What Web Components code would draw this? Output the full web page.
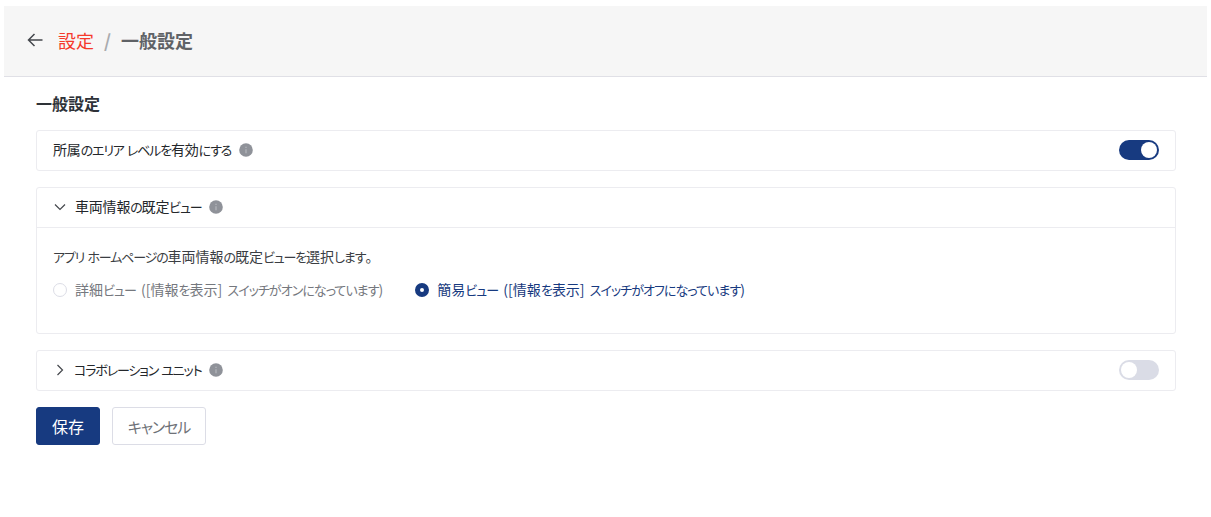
<!DOCTYPE html>
<html lang="ja">
<head>
<meta charset="utf-8">
<title>一般設定</title>
<style>
  html, body { margin: 0; padding: 0; background: #fff; }
  body { font-family: "Noto Sans CJK JP", "Noto Sans", sans-serif; font-feature-settings: "palt"; }
</style>
</head>
<body>
<settings-page>
  <page-header slot="header" parent="設定" current="一般設定"></page-header>
  <h-title>一般設定</h-title>

  <setting-card label="所属のエリア レベルを有効にする" toggle="on"></setting-card>

  <setting-card label="車両情報の既定ビュー" arrow="down" expanded>
    <p-text>アプリ ホームページの車両情報の既定ビューを選択します。</p-text>
    <radio-row>
      <radio-option>詳細ビュー ([情報を表示] スイッチがオンになっています)</radio-option>
      <radio-option checked>簡易ビュー ([情報を表示] スイッチがオフになっています)</radio-option>
    </radio-row>
  </setting-card>

  <setting-card label="コラボレーション ユニット" arrow="right" toggle="off"></setting-card>

  <action-bar>
    <ui-button primary>保存</ui-button>
    <ui-button>キャンセル</ui-button>
  </action-bar>
</settings-page>

<script>
// the original font has narrow kana, so kana runs get a tighter setting than the kanji
function tight(text) {
    return text.replace(/[ぁ-んァ-ヶー]+/g, (run) => `<span style="font-size:13px;letter-spacing:var(--kana-spacing,-1.15px)">${run}</span>`);
}

class base extends HTMLElement {
    constructor() {
        super();
        this._shadowDOM = this.attachShadow({mode: 'open'});
    }
}

class settingsPage extends base {
    connectedCallback() {
        this._shadowDOM.innerHTML = `
            <style>
                :host { display: block; padding-top: 6px; }
                .content { display: flex; flex-direction: column; padding: 0 35px 0 36px; }
            </style>
            <slot name="header"></slot>
            <div class="content"><slot></slot></div>
        `;
    }
}

class pageHeader extends base {
    connectedCallback() {
        this._shadowDOM.innerHTML = `
            <style>
                :host {
                    display: flex;
                    align-items: center;
                    height: 71px;
                    margin: 0 4px;
                    padding-left: 22px;
                    padding-bottom: 2px;
                    box-sizing: border-box;
                    background: #f6f6f6;
                    border-bottom: 1px solid #e0e0e6;
                    font-size: 18px;
                    line-height: 26px;
                }
                svg { display: block; margin-right: 14px; }
                .parent { color: #f5392b; }
                .sep { color: #a9abae; margin: 0 10px; font-weight: 700; }
                .current { color: #5f6266; font-weight: 700; }
            </style>
            <svg width="18" height="18" viewBox="0 0 18 18" fill="none" stroke="#44474c" stroke-width="1.5">
                <path d="M16.5 9H2.500M8.500 3L2.500 9l6 6"/>
            </svg>
            <span class="parent">${this.getAttribute('parent')}</span>
            <span class="sep">/</span>
            <span class="current">${this.getAttribute('current')}</span>
        `;
    }
}

class hTitle extends base {
    connectedCallback() {
        this._shadowDOM.innerHTML = `
            <style>
                :host {
                    display: block;
                    margin-top: 14px;
                    margin-bottom: 15px;
                    font-size: 16px;
                    line-height: 24px;
                    font-weight: 700;
                    color: #2e3238;
                }
            </style>
            <slot></slot>
        `;
    }
}

class settingCard extends base {
    connectedCallback() {
        const arrow = this.getAttribute('arrow');
        const toggle = this.getAttribute('toggle');
        const expanded = this.hasAttribute('expanded');
        let arrowSvg = '';
        if (arrow === 'down') {
            arrowSvg = '<svg class="arrow down" width="14" height="14" viewBox="0 0 14 14" fill="none" stroke="#44474c" stroke-width="1.2"><path d="M2 4.500l5 5 5-5"/></svg>';
        } else if (arrow === 'right') {
            arrowSvg = '<svg class="arrow" width="14" height="14" viewBox="0 0 14 14" fill="none" stroke="#44474c" stroke-width="1.2"><path d="M4.500 2l5 5-5 5"/></svg>';
        }
        this._shadowDOM.innerHTML = `
            <style>
                :host {
                    display: block;
                    margin-bottom: 16px;
                    background: #fff;
                    border: 1px solid #ececf0;
                    border-radius: 3px;
                    font-size: 14px;
                    color: #24272b;
                }
                .head {
                    display: flex;
                    align-items: center;
                    height: 39px;
                    padding: 0 16px 1px;
                    box-sizing: border-box;
                }
                .arrow { display: block; margin-right: 7px; flex: none; }
                .arrow.down { margin-right: 8px; }
                .label { white-space: pre; line-height: 20px; letter-spacing: -0.2px; padding-bottom: 2px; }
                .info { margin-left: 8px; display: block; flex: none; }
                .spacer { flex: 1; }
                .body {
                    height: 106px;
                    border-top: 1px solid #ececf0;
                    padding: 0 16px;
                    box-sizing: border-box;
                }
            </style>
            <div class="head">
                ${arrowSvg}
                <span class="label">${tight(this.getAttribute('label'))}</span>
                <svg class="info" width="14" height="14" viewBox="0 0 14 14">
                    <circle cx="7" cy="7" r="6.800" fill="#8f9299"/>
                    <path d="M7 6.200v4M7 3.800v1.200" stroke="#b9bbc0" stroke-width="1.100"/>
                </svg>
                <span class="spacer"></span>
                ${toggle ? `<ui-toggle ${toggle === 'on' ? 'on' : ''}></ui-toggle>` : ''}
            </div>
            ${expanded ? '<div class="body"><slot></slot></div>' : ''}
        `;
    }
}

class uiToggle extends base {
    connectedCallback() {
        this._shadowDOM.innerHTML = `
            <style>
                :host {
                    display: flex;
                    width: 40px;
                    height: 20px;
                    padding: 2px;
                    box-sizing: border-box;
                    border-radius: 10px;
                    background: #dadce6;
                    justify-content: flex-start;
                }
                :host([on]) { background: #173a80; justify-content: flex-end; }
                i { display: block; width: 16px; height: 16px; border-radius: 50%; background: #fff; }
            </style>
            <i></i>
        `;
    }
}

class pText extends base {
    connectedCallback() {
        this.innerHTML = tight(this.textContent);
        this._shadowDOM.innerHTML = `
            <style>
                :host {
                    display: block;
                    padding-top: 18px;
                    font-size: 14px;
                    line-height: 20px;
                    color: #3b3e43;
                }
            </style>
            <slot></slot>
        `;
    }
}

class radioRow extends base {
    connectedCallback() {
        this._shadowDOM.innerHTML = `
            <style>
                :host { display: flex; gap: 32px; margin-top: 12px; }
            </style>
            <slot></slot>
        `;
    }
}

class radioOption extends base {
    connectedCallback() {
        this.innerHTML = tight(this.textContent);
        this._shadowDOM.innerHTML = `
            <style>
                :host {
                    --kana-spacing: -0.95px;
                    display: flex;
                    align-items: center;
                    gap: 8px;
                    font-size: 14px;
                    line-height: 20px;
                    word-spacing: 2px;
                    color: #75787e;
                }
                :host([checked]) { color: #173a80; }
                i {
                    display: block;
                    width: 14px;
                    height: 14px;
                    box-sizing: border-box;
                    border-radius: 50%;
                    border: 1px solid #dcdde6;
                    background: #fff;
                    flex: none;
                }
                :host([checked]) i { border: 5px solid #173a80; }
                span { white-space: pre; }
            </style>
            <i></i>
            <span><slot></slot></span>
        `;
    }
}

class actionBar extends base {
    connectedCallback() {
        this._shadowDOM.innerHTML = `
            <style>
                :host { display: flex; gap: 12px; }
            </style>
            <slot></slot>
        `;
    }
}

class uiButton extends base {
    connectedCallback() {
        this._shadowDOM.innerHTML = `
            <style>
                :host {
                    display: flex;
                    align-items: center;
                    justify-content: center;
                    height: 38px;
                    width: 94px;
                    box-sizing: border-box;
                    border: 1px solid #dcdde6;
                    border-radius: 3px;
                    background: #fff;
                    color: #6f7278;
                    font-size: 15px;
                    letter-spacing: -1.1px;
                }
                :host([primary]) {
                    width: 64px;
                    background: #173a80;
                    border-color: #173a80;
                    color: #fff;
                    font-size: 16px;
                    letter-spacing: 0;
                }
            </style>
            <slot></slot>
        `;
    }
}

window.customElements.define('settings-page', settingsPage);
window.customElements.define('page-header', pageHeader);
window.customElements.define('h-title', hTitle);
window.customElements.define('setting-card', settingCard);
window.customElements.define('ui-toggle', uiToggle);
window.customElements.define('p-text', pText);
window.customElements.define('radio-row', radioRow);
window.customElements.define('radio-option', radioOption);
window.customElements.define('action-bar', actionBar);
window.customElements.define('ui-button', uiButton);
</script>
</body>
</html>
